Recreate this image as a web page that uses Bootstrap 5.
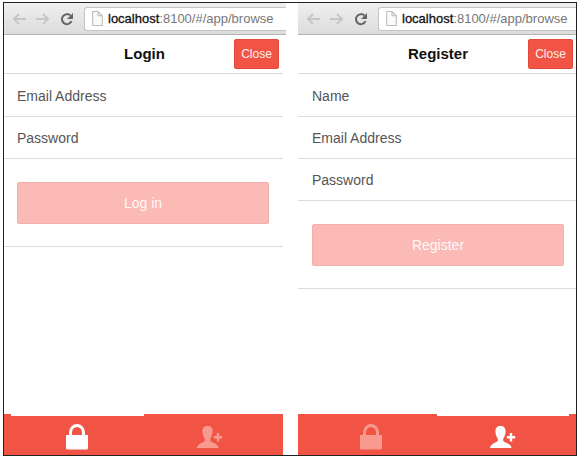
<!DOCTYPE html>
<html lang="en">
<head>
<meta charset="utf-8">
<meta name="viewport" content="width=device-width, initial-scale=1">
<title>Login and Register</title>
<link href="https://cdn.jsdelivr.net/npm/bootstrap@5.3.0/dist/css/bootstrap.min.css" rel="stylesheet">
<style>
  body { font-family: "Liberation Sans", Arial, sans-serif; font-size: 14px; line-height: 20px; color: #222; background: #fff; padding: 2px 6px 10px 3px; }
  .screens { display: grid; grid-template-columns: 282fr 278fr; column-gap: 12px; border: 1px solid #222; }
  .chrome-bar { height: 32px; padding-left: 8px; background: linear-gradient(#efefef, #dcdcdc); border-bottom: 1px solid #b4b4b4; }
  .chrome-btn { width: 24px; height: 24px; color: #c6c6c6; }
  .chrome-btn.reload { color: #666; }
  .address { height: 24px; padding-left: 6px; font-size: 13px; color: #777; background: #fff; border: 1px solid #c4c4c4; border-right: 0; border-radius: 3px 0 0 3px; }
  .address b { font-weight: 400; color: #111; -webkit-text-stroke: .3px #111; }
  .login-screen .app-view { margin-right: 3px; }
  .app-head { height: 39px; padding-left: 2px; border-bottom: 1px solid #d9d9d9; }
  .app-title { font-size: 15px; line-height: 20px; font-weight: 700; color: #111; }
  .btn-close-view { right: 4px; top: 4px; width: 45px; height: 30px; font-size: 12px; line-height: 16px; color: #fff0ee; background: #f15345; border: 1px solid #e2493c; border-radius: 2px; }
  .register-screen .btn-close-view { right: 3px; }
  .fields { padding-top: 1px; }
  .field { height: 42px; padding: 0 13px; font-size: 14px; line-height: 20px; color: #444; border: 0; border-bottom: 1px solid #ddd; border-radius: 0; }
  .field::placeholder { color: #555; opacity: 1; }
  .action { padding: 23px 14px 22px 13px; border-bottom: 1px solid #ddd; }
  .register-screen .field { padding: 0 14px; }
  .register-screen .action { padding-left: 14px; padding-right: 12px; }
  .btn-action { height: 42px; font-size: 14px; line-height: 20px; color: #fff8f7; background: #fbbab6; border: 1px solid #f3b0ab; border-radius: 2px; }
  .btn-action:hover, .btn-close-view:hover { color: #fff; background: #f15345; }
  .tabs { height: 41px; padding: 0 7px; background: #f15345; }
  .tab-btn { flex: 1 1 0; color: #f99a91; border-top: 2px solid transparent; }
  .tab-btn.active { color: #fff; border-top-color: #fff; }
  .tab-btn svg { margin-top: 2px; }
</style>
<script src="https://cdn.jsdelivr.net/npm/bootstrap@5.3.0/dist/js/bootstrap.bundle.min.js"></script>
</head>
<body class="d-flex flex-column min-vh-100">
<svg class="d-none" aria-hidden="true">
  <symbol id="back" viewBox="0 0 14 14"><path d="M7 2 2 7l5 5M2 7h12" fill="none" stroke="currentColor" stroke-width="2"/></symbol>
  <symbol id="forward" viewBox="0 0 14 14"><path d="m7 2 5 5-5 5M12 7H0" fill="none" stroke="currentColor" stroke-width="2"/></symbol>
  <symbol id="reload" viewBox="0 0 14 14"><path d="M11.500 9.200A5 5 0 1 1 10.500 3.600" fill="none" stroke="currentColor" stroke-width="2"/><path d="M13 1v6H7z" fill="currentColor"/></symbol>
  <symbol id="page" viewBox="0 0 12 14"><path d="M1.500.5h5l4 4v9h-9zM6.500.5v4h4" fill="#fafafa" stroke="#bbb"/></symbol>
  <symbol id="lock" viewBox="0 0 22 26"><path d="M0 11h3V8.500a8 8.500 0 0 1 16 0V11h3v13q0 1.500-1.500 1.500h-19Q0 25.500 0 24zm6 0h10V8.500a5 5.500 0 0 0-10 0z" fill="currentColor"/></symbol>
  <symbol id="person" viewBox="0 0 26 22"><path d="M10.500 0c4 0 5.500 2.600 5 6.500-.3 3-1.200 4.600-2.300 6v2.200c0 1.500 7.800 2.300 8.300 7.300H0c.5-5 7.800-5.800 7.800-7.300v-2.200C6.700 11.100 5.800 9.500 5.500 6.500 5 2.600 6.500 0 10.500 0zM19.800 7h2.400v3h3v2.600h-3v3h-2.400v-3h-3V10h3z" fill="currentColor"/></symbol>
</svg>
<main class="screens flex-grow-1">
  <section class="login-screen d-flex flex-column" aria-label="Login screen">
    <div class="chrome-bar d-flex align-items-center">
      <button class="btn p-0 border-0 chrome-btn d-flex align-items-center" type="button" aria-label="Back"><svg width="14" height="14"><use href="#back"/></svg></button>
      <button class="btn p-0 border-0 chrome-btn d-flex align-items-center" type="button" aria-label="Forward"><svg width="14" height="14"><use href="#forward"/></svg></button>
      <button class="btn p-0 border-0 chrome-btn reload d-flex align-items-center" type="button" aria-label="Reload"><svg width="14" height="14"><use href="#reload"/></svg></button>
      <div class="address d-flex align-items-center flex-grow-1 text-nowrap"><svg class="me-1" width="13" height="15"><use href="#page"/></svg><span><b>localhost</b>:8100/#/app/browse</span></div>
    </div>
    <div class="app-view d-flex flex-column flex-grow-1">
      <header class="app-head position-relative d-flex align-items-center justify-content-center">
        <h1 class="app-title m-0">Login</h1>
        <button class="btn btn-close-view position-absolute p-0" type="button">Close</button>
      </header>
      <form>
        <div class="fields">
          <input class="field d-block w-100" type="email" placeholder="Email Address" aria-label="Email Address">
          <input class="field d-block w-100" type="password" placeholder="Password" aria-label="Password">
        </div>
        <div class="action"><button class="btn btn-action w-100 p-0" type="button">Log in</button></div>
      </form>
      <nav class="tabs d-flex mt-auto" aria-label="Login tabs">
        <button class="btn tab-btn active border-start-0 border-end-0 border-bottom-0 rounded-0 bg-transparent p-0" type="button" aria-label="Login"><svg width="22" height="26"><use href="#lock"/></svg></button>
        <button class="btn tab-btn border-start-0 border-end-0 border-bottom-0 rounded-0 bg-transparent p-0" type="button" aria-label="Register"><svg width="26" height="22"><use href="#person"/></svg></button>
      </nav>
    </div>
  </section>
  <section class="register-screen d-flex flex-column" aria-label="Register screen">
    <div class="chrome-bar d-flex align-items-center">
      <button class="btn p-0 border-0 chrome-btn d-flex align-items-center" type="button" aria-label="Back"><svg width="14" height="14"><use href="#back"/></svg></button>
      <button class="btn p-0 border-0 chrome-btn d-flex align-items-center" type="button" aria-label="Forward"><svg width="14" height="14"><use href="#forward"/></svg></button>
      <button class="btn p-0 border-0 chrome-btn reload d-flex align-items-center" type="button" aria-label="Reload"><svg width="14" height="14"><use href="#reload"/></svg></button>
      <div class="address d-flex align-items-center flex-grow-1 text-nowrap"><svg class="me-1" width="13" height="15"><use href="#page"/></svg><span><b>localhost</b>:8100/#/app/browse</span></div>
    </div>
    <div class="app-view d-flex flex-column flex-grow-1">
      <header class="app-head position-relative d-flex align-items-center justify-content-center">
        <h1 class="app-title m-0">Register</h1>
        <button class="btn btn-close-view position-absolute p-0" type="button">Close</button>
      </header>
      <form>
        <div class="fields">
          <input class="field d-block w-100" type="text" placeholder="Name" aria-label="Name">
          <input class="field d-block w-100" type="email" placeholder="Email Address" aria-label="Email Address">
          <input class="field d-block w-100" type="password" placeholder="Password" aria-label="Password">
        </div>
        <div class="action"><button class="btn btn-action w-100 p-0" type="button">Register</button></div>
      </form>
      <nav class="tabs d-flex mt-auto" aria-label="Register tabs">
        <button class="btn tab-btn border-start-0 border-end-0 border-bottom-0 rounded-0 bg-transparent p-0" type="button" aria-label="Login"><svg width="22" height="26"><use href="#lock"/></svg></button>
        <button class="btn tab-btn active border-start-0 border-end-0 border-bottom-0 rounded-0 bg-transparent p-0" type="button" aria-label="Register"><svg width="26" height="22"><use href="#person"/></svg></button>
      </nav>
    </div>
  </section>
</main>
</body>
</html>
